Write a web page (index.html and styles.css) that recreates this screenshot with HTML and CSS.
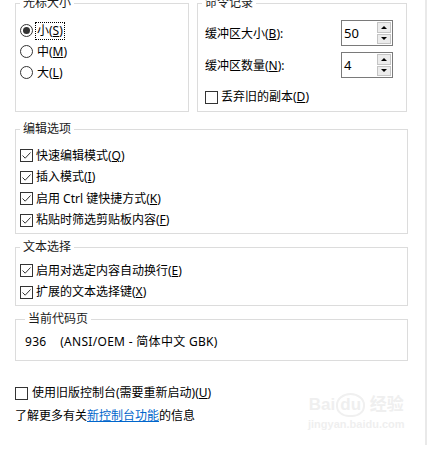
FILE: index.html
```html
<!DOCTYPE html>
<html lang="zh-CN">
<head>
    <meta charset="UTF-8">
    <meta name="viewport" content="width=device-width, initial-scale=1.0">
    <title>控制台选项</title>
    <link rel="stylesheet" href="styles.css">
</head>
<body>
    <div class="window">
        <div class="top-row">
            <fieldset class="group cursor">
                <legend>光标大小</legend>
                <label class="option">
                    <svg class="radio" width="13" height="13" viewBox="0 0 13 13"><circle cx="6.5" cy="6.5" r="6" fill="#fff" stroke="#333"/><circle cx="6.5" cy="6.5" r="3.5" fill="#333"/></svg>
                    <span class="focus">小(<u>S</u>)</span>
                </label>
                <label class="option">
                    <svg class="radio" width="13" height="13" viewBox="0 0 13 13"><circle cx="6.5" cy="6.5" r="6" fill="#fff" stroke="#333"/></svg>
                    <span class="text">中(<u>M</u>)</span>
                </label>
                <label class="option">
                    <svg class="radio" width="13" height="13" viewBox="0 0 13 13"><circle cx="6.5" cy="6.5" r="6" fill="#fff" stroke="#333"/></svg>
                    <span class="text">大(<u>L</u>)</span>
                </label>
            </fieldset>

            <fieldset class="group history">
                <legend>命令记录</legend>
                <div class="spin-row">
                    <span>缓冲区大小(<u>B</u>):</span>
                    <div class="spin">
                        <span class="value">50</span>
                        <div class="arrows"><span class="up"></span><span class="down"></span></div>
                    </div>
                </div>
                <div class="spin-row">
                    <span>缓冲区数量(<u>N</u>):</span>
                    <div class="spin">
                        <span class="value">4</span>
                        <div class="arrows"><span class="up"></span><span class="down"></span></div>
                    </div>
                </div>
                <label class="option discard">
                    <svg class="box" width="13" height="13" viewBox="0 0 13 13"><rect x="0.5" y="0.5" width="12" height="12" fill="#fff" stroke="#333"/></svg>
                    <span>丢弃旧的副本(<u>D</u>)</span>
                </label>
            </fieldset>
        </div>

        <fieldset class="group edit">
            <legend>编辑选项</legend>
            <label class="option row">
                <svg class="box" width="13" height="13" viewBox="0 0 13 13"><rect x="0.5" y="0.5" width="12" height="12" fill="#fff" stroke="#333"/><path d="M2.5 6.5 L5.2 9.2 L10.5 3.5" fill="none" stroke="#333"/></svg>
                <span>快速编辑模式(<u>Q</u>)</span>
            </label>
            <label class="option row">
                <svg class="box" width="13" height="13" viewBox="0 0 13 13"><rect x="0.5" y="0.5" width="12" height="12" fill="#fff" stroke="#333"/><path d="M2.5 6.5 L5.2 9.2 L10.5 3.5" fill="none" stroke="#333"/></svg>
                <span>插入模式(<u>I</u>)</span>
            </label>
            <label class="option row">
                <svg class="box" width="13" height="13" viewBox="0 0 13 13"><rect x="0.5" y="0.5" width="12" height="12" fill="#fff" stroke="#333"/><path d="M2.5 6.5 L5.2 9.2 L10.5 3.5" fill="none" stroke="#333"/></svg>
                <span>启用 Ctrl 键快捷方式(<u>K</u>)</span>
            </label>
            <label class="option row">
                <svg class="box" width="13" height="13" viewBox="0 0 13 13"><rect x="0.5" y="0.5" width="12" height="12" fill="#fff" stroke="#333"/><path d="M2.5 6.5 L5.2 9.2 L10.5 3.5" fill="none" stroke="#333"/></svg>
                <span>粘贴时筛选剪贴板内容(<u>F</u>)</span>
            </label>
        </fieldset>

        <fieldset class="group selection">
            <legend>文本选择</legend>
            <label class="option row">
                <svg class="box" width="13" height="13" viewBox="0 0 13 13"><rect x="0.5" y="0.5" width="12" height="12" fill="#fff" stroke="#333"/><path d="M2.5 6.5 L5.2 9.2 L10.5 3.5" fill="none" stroke="#333"/></svg>
                <span>启用对选定内容自动换行(<u>E</u>)</span>
            </label>
            <label class="option row">
                <svg class="box" width="13" height="13" viewBox="0 0 13 13"><rect x="0.5" y="0.5" width="12" height="12" fill="#fff" stroke="#333"/><path d="M2.5 6.5 L5.2 9.2 L10.5 3.5" fill="none" stroke="#333"/></svg>
                <span>扩展的文本选择键(<u>X</u>)</span>
            </label>
        </fieldset>

        <fieldset class="group codepage">
            <legend>当前代码页</legend>
            <div class="codepage-text">936    (ANSI/OEM - 简体中文 GBK)</div>
        </fieldset>

        <label class="option legacy">
            <svg class="box" width="13" height="13" viewBox="0 0 13 13"><rect x="0.5" y="0.5" width="12" height="12" fill="#fff" stroke="#333"/></svg>
            <span>使用旧版控制台(需要重新启动)(<u>U</u>)</span>
        </label>
        <div class="learn">了解更多有关<a href="#">新控制台功能</a>的信息</div>

        <div class="watermark">
            <div class="wm-logo">Bai<span class="wm-du">du</span> 经验</div>
            <div class="wm-url">jingyan.baidu.com</div>
        </div>
    </div>
</body>
</html>
```

FILE: styles.css
```css
body {
    margin: 0;
    background: #fff;
    font-family: "Noto Sans", "Noto Sans CJK SC", sans-serif;
    font-size: 12px;
    color: #000;
    overflow: hidden;
}
.window {
    position: relative;
    width: 410px;
    height: 450px;
    padding-left: 15px;
    border-right: 2px solid #e9e9e9;
}
.top-row {
    display: flex;
    gap: 8px;
    width: 392px;
    margin-top: -5px;
}
.group {
    box-sizing: border-box;
    border: 1px solid #dcdcdc;
    margin: 0;
    padding: 0 4px;
    min-width: 0;
}
.group legend {
    padding: 0 3px;
    line-height: 16px;
    color: #1a1a1a;
}
.cursor {
    width: 174px;
    padding-top: 9px;
}
.history {
    width: 210px;
    padding: 9px 13px 6px 7px;
}
.history legend {
    margin-left: -3px;
}
u {
    text-decoration-thickness: 1px;
    text-underline-offset: 1px;
}
.option {
    display: flex;
    align-items: center;
    gap: 3px;
    height: 21px;
    line-height: 16px;
}
.option svg {
    flex: none;
}
.focus {
    outline: 1px dotted #000;
    padding: 0 1px;
}
.option .text {
    padding-left: 1px;
}
.spin-row {
    display: flex;
    justify-content: space-between;
    align-items: center;
    height: 26px;
}
.spin-row + .spin-row {
    margin-top: 6px;
}
.spin {
    box-sizing: border-box;
    display: flex;
    width: 52px;
    height: 26px;
    border: 1px solid #7a7a7a;
}
.value {
    flex: 1;
    padding-left: 2px;
    font-size: 13px;
    line-height: 24px;
}
.arrows {
    display: flex;
    flex-direction: column;
    gap: 1px;
    width: 14px;
    margin: 1px 1px 1px 0;
}
.arrows span {
    flex: 1;
    box-sizing: border-box;
    border: 1px solid #c4c4c4;
    background: #ececec;
    display: flex;
    align-items: center;
    justify-content: center;
}
.arrows .up::after,
.arrows .down::after {
    content: "";
    border-left: 3px solid transparent;
    border-right: 3px solid transparent;
}
.arrows .up::after {
    border-bottom: 3px solid #000;
}
.arrows .down::after {
    border-top: 3px solid #000;
}
.discard {
    height: 16px;
    margin-top: 11px;
}
.edit,
.selection,
.codepage {
    width: 393px;
}
.edit {
    margin-top: 9px;
    padding-top: 8px;
    padding-bottom: 2px;
}
.selection {
    margin-top: 5px;
    padding-top: 5px;
    padding-bottom: 2px;
}
.row {
    height: 21.5px;
}
.codepage {
    margin-top: 5px;
    padding: 4px 4px 8px 9px;
}
.codepage-text {
    height: 21px;
    line-height: 21px;
    white-space: pre;
    letter-spacing: 0.3px;
}
.legacy {
    height: 22px;
    margin-top: 21px;
    gap: 4px;
}
.learn {
    height: 23px;
    line-height: 23px;
}
.learn a {
    color: #0066cc;
    text-decoration: underline;
}
.watermark {
    position: absolute;
    left: 308px;
    top: 398px;
    color: #efefef;
    font-family: "Liberation Sans", "Noto Sans CJK SC", sans-serif;
    text-align: center;
}
.wm-logo {
    font-size: 17px;
    font-weight: bold;
    line-height: 20px;
}
.wm-du {
    display: inline-block;
    border: 2px solid #f0f0f0;
    border-radius: 50% 50% 45% 45%;
    padding: 0 2px;
    margin-left: 1px;
}
.wm-url {
    font-size: 11px;
    font-weight: bold;
    line-height: 14px;
}
```
